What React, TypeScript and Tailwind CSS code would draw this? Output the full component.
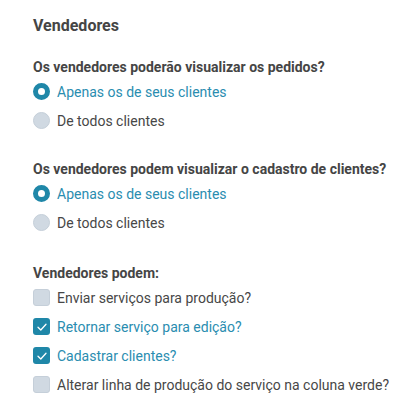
import React from "react";

function Radio({ checked, label }: { checked: boolean; label: string }) {
  return (
    <div className="flex h-[29px] items-center">
      {checked ? (
        <span className="box-border h-[17px] w-[17px] shrink-0 rounded-full border-[5px] border-[#1f87a8] bg-white" />
      ) : (
        <span className="box-border h-[17px] w-[17px] shrink-0 rounded-full border border-[#c5cfd9] bg-[#d0d9e2]" />
      )}
      <span className={"ml-[7px] text-[14px] leading-5 " + (checked ? "text-[#2a8db0]" : "text-[#474747]")}>{label}</span>
    </div>
  );
}

function Check({ checked, label }: { checked: boolean; label: string }) {
  return (
    <div className="flex h-[29px] items-center">
      {checked ? (
        <span className="flex h-[17px] w-[17px] shrink-0 items-center justify-center rounded-[3px] bg-[#1f87a8]">
          <svg width="10" height="8" viewBox="0 0 10 8" fill="none">
            <path d="M1 4.2 L3.8 7 L9 1.2" stroke="white" strokeWidth="1.3" strokeLinecap="round" strokeLinejoin="round" />
          </svg>
        </span>
      ) : (
        <span className="box-border h-[17px] w-[17px] shrink-0 rounded-[3px] border border-[#c5cfd9] bg-[#d0d9e2]" />
      )}
      <span className={"ml-[7px] text-[14px] leading-5 " + (checked ? "text-[#2a8db0]" : "text-[#474747]")}>{label}</span>
    </div>
  );
}

export default function App() {
  return (
    <div
      className="h-[414px] w-[420px] bg-white pl-[33px] pt-[14px]"
      style={{ fontFamily: "Roboto, 'Liberation Sans', sans-serif" }}
    >
      <h1 className="text-[16px] font-bold leading-6 text-[#454545]">Vendedores</h1>

      <div className="mt-[19px]">
        <h2 className="text-[14px] font-bold leading-5 text-[#454545]">Os vendedores poderão visualizar os pedidos?</h2>
        <Radio checked label="Apenas os de seus clientes" />
        <Radio checked={false} label="De todos clientes" />
      </div>

      <div className="mt-[24px]">
        <h2 className="text-[14px] font-bold leading-5 text-[#454545]">Os vendedores podem visualizar o cadastro de clientes?</h2>
        <Radio checked label="Apenas os de seus clientes" />
        <Radio checked={false} label="De todos clientes" />
      </div>

      <div className="mt-[26px]">
        <h2 className="text-[14px] font-bold leading-5 text-[#454545]">Vendedores podem:</h2>
        <Check checked={false} label="Enviar serviços para produção?" />
        <Check checked label="Retornar serviço para edição?" />
        <Check checked label="Cadastrar clientes?" />
        <Check checked={false} label="Alterar linha de produção do serviço na coluna verde?" />
      </div>
    </div>
  );
}
